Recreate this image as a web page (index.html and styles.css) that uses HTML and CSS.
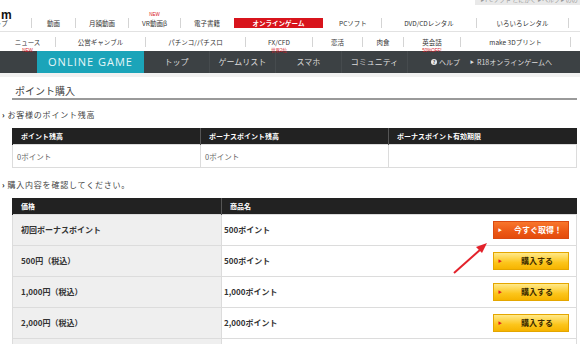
FILE: index.html
```html
<!DOCTYPE html>
<html lang="ja">
<head>
  <meta charset="UTF-8">
  <title>ポイント購入 | オンラインゲーム</title>
  <link rel="stylesheet" href="styles.css">
</head>
<body>

  <div class="topbar">
    <span class="logo">m</span>
    <div class="crumbs">▸ PCソフト とにかく ▸ ヘルプ ▸ のの</div>
  </div>

  <ul class="nav nav-main">
    <li>トップ</li>
    <li>動画</li>
    <li>月額動画</li>
    <li>VR動画β<span class="badge badge-top">NEW</span></li>
    <li>電子書籍</li>
    <li class="current"><span>オンラインゲーム</span></li>
    <li>PCソフト</li>
    <li>DVD/CDレンタル</li>
    <li>いろいろレンタル</li>
    <li></li>
  </ul>

  <ul class="nav nav-sub">
    <li>ニュース<span class="badge badge-bottom">NEW</span></li>
    <li>公営ギャンブル</li>
    <li>パチンコ/パチスロ</li>
    <li>FX/CFD<span class="badge badge-bottom">世界2位</span></li>
    <li>恋活</li>
    <li>肉食</li>
    <li>英会話<span class="badge badge-bottom">50%OFF!</span></li>
    <li>make 3Dプリント</li>
    <li></li>
  </ul>

  <div class="gamebar">
    <div class="game-logo">ONLINE GAME</div>
    <ul class="game-menu">
      <li>トップ</li>
      <li>ゲームリスト</li>
      <li>スマホ</li>
      <li>コミュニティ</li>
    </ul>
    <div class="game-links">
      <span class="help"><i class="help-icon">?</i>ヘルプ</span>
      <span class="r18"><i class="tri">▶</i>R18オンラインゲームへ</span>
    </div>
  </div>

  <div class="content">
    <h1 class="title">ポイント購入</h1>

    <h2 class="subhead">お客様のポイント残高</h2>
    <table class="balance">
      <tr>
        <th>ポイント残高</th>
        <th>ボーナスポイント残高</th>
        <th>ボーナスポイント有効期限</th>
      </tr>
      <tr>
        <td>0ポイント</td>
        <td>0ポイント</td>
        <td></td>
      </tr>
    </table>

    <h2 class="subhead subhead-gap">購入内容を確認してください。</h2>
    <table class="products">
      <tr>
        <th>価格</th>
        <th colspan="2">商品名</th>
      </tr>
      <tr>
        <td class="price">初回ボーナスポイント</td>
        <td class="name">500ポイント</td>
        <td class="action"><button class="btn btn-hot"><i class="tri">▶</i>今すぐ取得！</button></td>
      </tr>
      <tr>
        <td class="price">500円（税込）</td>
        <td class="name">500ポイント</td>
        <td class="action"><button class="btn"><i class="tri">▶</i>購入する</button></td>
      </tr>
      <tr>
        <td class="price">1,000円（税込）</td>
        <td class="name">1,000ポイント</td>
        <td class="action"><button class="btn"><i class="tri">▶</i>購入する</button></td>
      </tr>
      <tr>
        <td class="price">2,000円（税込）</td>
        <td class="name">2,000ポイント</td>
        <td class="action"><button class="btn"><i class="tri">▶</i>購入する</button></td>
      </tr>
      <tr>
        <td class="price">3,000円（税込）</td>
        <td class="name">3,000ポイント</td>
        <td class="action"><button class="btn"><i class="tri">▶</i>購入する</button></td>
      </tr>
    </table>

    <!-- annotation arrow -->
    <svg class="pointer" width="40" height="36" viewBox="0 0 40 36">
      <line x1="3" y1="33" x2="30" y2="9" stroke="#e3222b" stroke-width="2"/>
      <polygon points="36,3 25,7 31,13" fill="#e3222b"/>
    </svg>
  </div>

</body>
</html>
```

FILE: styles.css
```css
html, body {
  margin: 0;
  overflow: hidden;
}
body {
  font-family: "Noto Sans CJK JP", "Noto Sans", sans-serif;
  background: #fff;
  color: #333;
  width: 580px;
}
ul {
  list-style: none;
  margin: 0;
  padding: 0;
}

/* top strip */
.topbar {
  height: 13px;
  position: relative;
}
.logo {
  font-family: "Liberation Sans", Arial, sans-serif;
  font-weight: bold;
  font-size: 12px;
  line-height: 11px;
  color: #111;
  padding-left: 1px;
}
.crumbs {
  position: absolute;
  left: 475px;
  top: -6px;
  width: 110px;
  height: 11px;
  background: #e9e9e9;
  color: #999;
  font-size: 6px;
  line-height: 11px;
  padding-left: 6px;
  white-space: nowrap;
  overflow: hidden;
}

/* global nav */
.nav {
  display: flex;
  align-items: center;
  font-size: 6.5px;
  color: #333;
  white-space: nowrap;
}
.nav li {
  position: relative;
  height: 10px;
  line-height: 10px;
  text-align: center;
  flex: none;
}
.nav-main {
  height: 17px;
  padding-top: 1px;
  border-bottom: 1px solid #e2e2e2;
}
.nav-main li + li { border-left: 1px solid #d4d4d4; }
.nav-main li:nth-child(1) { width: 60px; margin-left: -29px; text-indent: -6px; }
.nav-main li:nth-child(2) { width: 43px; }
.nav-main li:nth-child(3) { width: 52px; }
.nav-main li:nth-child(4) { width: 51px; }
.nav-main li:nth-child(5) { width: 52px; }
.nav-main li:nth-child(6) { width: 92px; border-left: none; }
.nav-main li:nth-child(7) { width: 56px; border-left: none; }
.nav-main li:nth-child(8) { width: 94px; }
.nav-main li:nth-child(9) { width: 91px; }
.nav-main li:nth-child(10) { width: 30px; }
.nav-main .current span {
  display: block;
  margin-left: 1px;
  width: 89px;
  background: #d8141c;
  color: #fff;
  font-weight: bold;
}
.nav-sub {
  height: 19px;
}
.nav-sub li + li { border-left: 1px solid #d4d4d4; }
.nav-sub li:nth-child(1) { width: 55px; }
.nav-sub li:nth-child(2) { width: 89px; }
.nav-sub li:nth-child(3) { width: 99px; }
.nav-sub li:nth-child(4) { width: 66px; }
.nav-sub li:nth-child(5) { width: 49px; }
.nav-sub li:nth-child(6) { width: 40px; }
.nav-sub li:nth-child(7) { width: 56px; }
.nav-sub li:nth-child(8) { width: 109px; }
.nav-sub li:nth-child(9) { width: 30px; }
.badge {
  position: absolute;
  left: 0;
  right: 0;
  font-size: 4.5px;
  line-height: 5px;
  color: #d8141c;
  font-family: "Liberation Sans", "Noto Sans CJK JP", sans-serif;
}
.badge-top { top: -6px; }
.badge-bottom { top: 11px; }

/* game bar */
.gamebar {
  display: flex;
  align-items: stretch;
  height: 22px;
  background: #3c4144;
  color: #dcdcdc;
  font-size: 8px;
  border-bottom: 4px solid #f1f1f1;
}
.game-logo {
  margin-left: 37px;
  width: 107px;
  background: #1ba4b9;
  color: #e6f6f8;
  font-family: "Open Sans", "Liberation Sans", sans-serif;
  font-size: 11px;
  letter-spacing: 1px;
  line-height: 22px;
  text-align: center;
}
.game-menu {
  display: flex;
}
.game-menu li {
  width: 65px;
  line-height: 22px;
  text-align: center;
  border-right: 1px solid #464b4e;
}
.game-links {
  margin-left: auto;
  display: flex;
  align-items: center;
  gap: 10px;
  padding-right: 28px;
  font-size: 7px;
}
.help, .r18 {
  display: flex;
  align-items: center;
}
.help-icon {
  display: inline-block;
  width: 6px;
  height: 6px;
  border-radius: 50%;
  background: #e8e8e8;
  color: #3c4144;
  font-size: 5px;
  line-height: 6px;
  text-align: center;
  font-style: normal;
  font-weight: bold;
  margin-right: 2px;
}
.tri {
  font-style: normal;
  font-size: 4px;
  margin-right: 3px;
}

/* content */
.content {
  position: relative;
  padding: 0 3px 0 12px;
}
.title {
  margin: 7px 0 0;
  padding-left: 3px;
  height: 14px;
  font-size: 10px;
  font-weight: normal;
  line-height: 14px;
  color: #444;
  border-bottom: 2px solid #9a9a9a;
}
.subhead {
  margin: 9px 0 0 -10px;
  font-size: 8px;
  font-weight: normal;
  line-height: 12px;
  letter-spacing: 0.8px;
  color: #444;
}
.subhead-gap {
  margin-top: 11px;
}
.subhead::before {
  content: "›";
  font-weight: bold;
  color: #111;
  margin-right: 2px;
}
table {
  width: 100%;
  border-collapse: collapse;
  table-layout: fixed;
}
th {
  background: #222;
  color: #fff;
  font-size: 7px;
  font-weight: bold;
  text-align: left;
  height: 16px;
  padding: 0 0 0 8px;
  border-left: 1px solid #555;
}
th:first-child { border-left: 1px solid #222; }
td {
  border: 1px solid #dcdcdc;
  font-size: 7.5px;
  padding: 0 0 0 4px;
}
.balance {
  margin-top: 7px;
}
.balance td {
  height: 22px;
  color: #666;
}
.products {
  margin-top: 7px;
}
.products th:first-child { width: 200px; }
.products td {
  height: 30px;
  padding-top: 0;
  padding-bottom: 0;
  font-size: 8px;
  font-weight: bold;
  color: #333;
  line-height: 12px;
}
.products .price {
  background: #efefef;
  padding-left: 8px;
}
.products .name {
  border-right: none;
  padding-left: 2px;
}
.products .action {
  width: 88px;
  border-left: none;
  text-align: right;
  padding: 0 7px 0 0;
  line-height: 0;
}
.btn {
  display: inline-flex;
  align-items: center;
  width: 76px;
  height: 18px;
  padding: 0 0 0 4px;
  border: 1px solid #e4a600;
  background: linear-gradient(#ffe98a, #fcc51b 60%, #f6b400);
  color: #3a2a00;
  font-family: "Noto Sans CJK JP", sans-serif;
  font-size: 8px;
  line-height: 12px;
  font-weight: bold;
  vertical-align: middle;
}
.btn .tri {
  color: #e31e1e;
  margin-right: 19px;
}
.btn-hot {
  border-color: #d94a12;
  background: linear-gradient(#f8762c, #ec5815 60%, #e44c0c);
  color: #fff;
}
.btn-hot .tri {
  color: #fff;
  margin-right: 12px;
}
.pointer {
  position: absolute;
  left: 451px;
  top: 156px;
}
```
